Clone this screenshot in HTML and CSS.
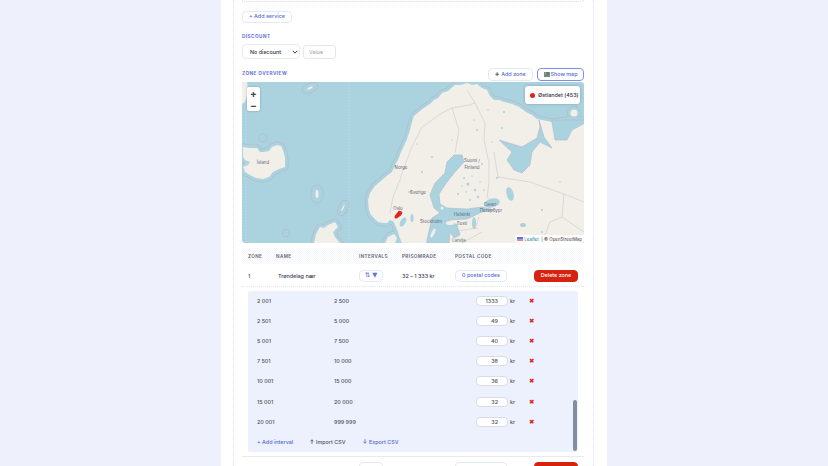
FILE: index.html
```html
<!DOCTYPE html>
<html lang="en">
<head>
<meta charset="utf-8">
<title>Zone overview</title>
<link rel="stylesheet" href="styles.css">
</head>
<body>
<main class="page">
  <section class="card">
    <div class="prev-box"></div>
    <button class="btn add-service">+ Add service</button>
    <div class="label discount-label">DISCOUNT</div>
    <div class="discount-row">
      <div class="select">No discount
        <svg class="chev" viewBox="0 0 8 5" width="6" height="4"><path d="M1 1l3 3 3-3" fill="none" stroke="#333" stroke-width="1.3"/></svg>
      </div>
      <div class="value">Value</div>
    </div>
    <div class="zone-head">
      <div class="label zone-label">ZONE OVERVIEW</div>
      <div class="zone-actions">
        <button class="btn add-zone"><span class="plus">✚</span> Add zone</button>
        <button class="btn show-map">
          <svg viewBox="0 0 8 7" width="6" height="5"><rect width="8" height="7" fill="#6b7689"/><path d="M0 5l3-2 2 2 3-2v4H0z" fill="#5f9a78"/><rect x="1" y="1" width="2" height="1.5" fill="#c9b48a"/></svg>
          Show map
        </button>
      </div>
    </div>
    <div class="map">
      <svg class="map-art" viewBox="0 0 342 161" width="342" height="161">
        <defs>
          <path id="land" d="M126 118L128 111 133 104 140 98 146 93 150 90 153 83 156 78 159 70 161 66 165 57 168 48 170 40 172 34 178 29 183 25 188 22 192 18 196 16 200 11 206 9 213 3 219 3 225 1 230 3 235 2 240 6 245 8 248 14 252 18 257 18 262 20 270 22 277 25 284 30 290 33 295 37 300 38 310 40 325 38 342 38 342 161 160 161 157 154 156 150 153 143 152 140 148 138 145 141 141 141 136 140 133 137 129 133 127 128Z"/>
          <path id="iceland" d="M1 65L8 66 15 66 18 70 21 70 27 69 30 65 35 63 39 64 41 68 43 76 43 85 37 87 31 90 27 95 21 97 14 96 8 93 3 90 1 85 6 83 8 80 3 78 1 75Z"/>
          <path id="scotland" d="M78 145L82 146 86 143 93 140 96 145 91 150 93 155 98 161 72 161 74 152Z"/>
          <path id="denmark" d="M143 161L146 155 152 152 155 156 153 161Z"/>
        </defs>
        <rect class="water" width="342" height="161"/>
        <g class="halo">
          <use href="#land"/><use href="#iceland"/><use href="#scotland"/><use href="#denmark"/>
          <ellipse cx="75" cy="112" rx="3" ry="6"/><circle cx="21" cy="56" r="1"/>
          <ellipse cx="68" cy="6" rx="5" ry="1.5" transform="rotate(-25 68 6)"/>
          <ellipse cx="101" cy="126" rx="1.5" ry="5" transform="rotate(25 101 126)"/>
          <circle cx="44" cy="151" r=".5"/><circle cx="332" cy="31" r="3.5"/>
        </g>
        <g class="halo-in">
          <use href="#land"/><use href="#iceland"/><use href="#scotland"/><use href="#denmark"/>
          <ellipse cx="75" cy="112" rx="3" ry="6"/><circle cx="21" cy="56" r="1"/>
          <ellipse cx="68" cy="6" rx="5" ry="1.5" transform="rotate(-25 68 6)"/>
          <ellipse cx="101" cy="126" rx="1.5" ry="5" transform="rotate(25 101 126)"/>
          <circle cx="44" cy="151" r=".5"/><circle cx="332" cy="31" r="3.5"/>
        </g>
        <g class="ground">
          <use href="#land"/><use href="#iceland"/><use href="#scotland"/><use href="#denmark"/>
          <path d="M0 0L5 0 6 10 3 20 0 22Z"/>
          <ellipse cx="75" cy="112" rx="1.5" ry="4"/>
          <circle cx="332" cy="31" r="3.5"/>
          <ellipse cx="68" cy="6" rx="3" ry="1" transform="rotate(-25 68 6)"/>
          <ellipse cx="101" cy="126" rx=".7" ry="3.5" transform="rotate(25 101 126)"/>
        </g>
        <g class="sea">
          <path d="M220 73L212 73 205 80 203 91 193 101 188 113 192 126 198 131 190 136 188 145 185 158 185 161 207 161 208 150 212 156 218 153 215 143 206 138 225 137 240 130 252 128 240 125 225 127 205 126 198 122 197 112 205 100 213 90 222 80Z"/>
          <path d="M297 38L302 55 310 66 298 60 290 70 288 83 280 91 272 88 265 78 270 70 257 58 267 61 280 65 295 56 298 45Z"/>
          <path d="M310 40L313 58 325 58 330 48 343 41 343 38 310 38Z"/>
        </g>
        <g class="islands">
          <ellipse cx="191" cy="151" rx="1.5" ry="5" transform="rotate(25 191 151)"/>
          <ellipse cx="208" cy="141" rx="4" ry="2"/>
          <circle cx="200" cy="126" r="1.5"/>
        </g>
        <g class="lakes">
          <ellipse cx="250" cy="121" rx="8" ry="4.5" transform="rotate(-15 250 121)"/>
          <ellipse cx="268" cy="112" rx="3.5" ry="7" transform="rotate(-15 268 112)"/>
          <ellipse cx="232" cy="141" rx="2" ry="6"/>
          <ellipse cx="281" cy="143" rx="3" ry="2"/>
          <ellipse cx="161" cy="140" rx="5" ry="2.5" transform="rotate(-60 161 140)"/>
          <ellipse cx="170" cy="136" rx="1.5" ry="4"/>
          <ellipse cx="168" cy="110" rx="2" ry="1"/>
          <circle cx="226" cy="102" r="1.5"/><circle cx="233" cy="108" r="1.2"/><circle cx="222" cy="96" r="1"/>
          <circle cx="236" cy="115" r="1.2"/><circle cx="216" cy="112" r="1"/><circle cx="228" cy="118" r="1"/>
          <circle cx="240" cy="82" r="1"/><circle cx="235" cy="48" r="1"/><circle cx="260" cy="46" r="1"/>
          <circle cx="255" cy="96" r="1"/><circle cx="278" cy="74" r="1"/><circle cx="262" cy="30" r="1"/>
          <circle cx="180" cy="90" r="1"/><circle cx="190" cy="75" r="1"/><circle cx="300" cy="128" r="1"/>
          <circle cx="220" cy="104" r=".8"/><circle cx="230" cy="94" r=".8"/><circle cx="238" cy="100" r=".8"/>
          <circle cx="224" cy="110" r=".8"/><circle cx="242" cy="108" r=".8"/><circle cx="250" cy="60" r=".8"/>
          <circle cx="210" cy="58" r=".8"/><circle cx="232" cy="38" r=".8"/><circle cx="246" cy="28" r=".8"/>
          <circle cx="300" cy="150" r="1"/><circle cx="318" cy="100" r=".8"/><circle cx="175" cy="62" r=".8"/>
        </g>
        <g class="borders">
          <path d="M227 23L233 21 243 41 242 58 247 81 247 101 245 115 250 120"/>
          <path d="M148 131L151 115 158 98 161 88 170 65 180 45 200 31 210 26 227 23"/>
          <path d="M210 26L217 48 213 71"/><path d="M233 21L225 8"/>
          <path d="M207 150L222 148 236 146M222 160L240 150M233 147L237 135"/>
          <path d="M342 120L322 112 320 135 342 150M300 161L308 140 320 135M252 70L256 95 288 100 322 112"/>
        </g>
        <path class="tile" d="M4 0V161M107 0V161"/>
        <path class="zone-shape" d="M153 134L157 129 160 130 159 133 155 136 153 136Z"/>
        <g class="map-text">
          <text x="21" y="82">Ísland</text>
          <text x="159" y="87">Norge</text>
          <text x="176" y="112">Sverige</text>
          <text x="230" y="80">Suomi /</text>
          <text x="230" y="87">Finland</text>
          <text x="156" y="128">Oslo</text>
          <text x="189" y="141">Stockholm</text>
          <text x="220" y="134">Helsinki</text>
          <text x="220" y="143">Eesti</text>
          <text x="249" y="124">Санкт-</text>
          <text x="249" y="130">Петербург</text>
          <text x="217" y="160">Latvija</text>
        </g>
      </svg>
      <div class="zoom-ctl"><span class="zoom-btn">+</span><span class="zoom-btn">−</span></div>
      <div class="legend"><i class="dot"></i>Østlandet (453)</div>
      <div class="attrib"><svg viewBox="0 0 6 4" width="6" height="4"><rect width="6" height="2" fill="#4c7be8"/><rect y="2" width="6" height="2" fill="#e88a8a"/></svg> <span class="link">Leaflet</span> | © OpenStreetMap</div>
    </div>
    <div class="tbl-head tbl-grid">
      <span>ZONE</span><span>NAME</span><span>INTERVALS</span><span>PRISOMRADE</span><span>POSTAL CODE</span>
    </div>
    <div class="tbl-row tbl-grid">
      <span>1</span>
      <span class="zname">Trøndelag nær</span>
      <span><button class="btn mini">⇅ ▼</button></span>
      <span>32 – 1 333 kr</span>
      <span class="end">
        <button class="btn postal">0 postal codes</button>
        <button class="btn danger">Delete zone</button>
      </span>
    </div>
    <div class="panel">
      <div class="int-row"><span>2 001</span><span>2 500</span><span class="num">1333</span><span class="kr">kr</span><span class="del">✖</span></div>
      <div class="int-row"><span>2 501</span><span>5 000</span><span class="num">49</span><span class="kr">kr</span><span class="del">✖</span></div>
      <div class="int-row"><span>5 001</span><span>7 500</span><span class="num">40</span><span class="kr">kr</span><span class="del">✖</span></div>
      <div class="int-row"><span>7 501</span><span>10 000</span><span class="num">38</span><span class="kr">kr</span><span class="del">✖</span></div>
      <div class="int-row"><span>10 001</span><span>15 000</span><span class="num">36</span><span class="kr">kr</span><span class="del">✖</span></div>
      <div class="int-row"><span>15 001</span><span>20 000</span><span class="num">32</span><span class="kr">kr</span><span class="del">✖</span></div>
      <div class="int-row"><span>20 001</span><span>999 999</span><span class="num">32</span><span class="kr">kr</span><span class="del">✖</span></div>
      <div class="panel-actions">
        <button class="ghost blue">+ Add interval</button>
        <button class="ghost"><svg viewBox="0 0 5 6" width="4" height="5"><path d="M2.5 6V1M.7 2.8l1.8-2 1.8 2" fill="none" stroke="currentColor" stroke-width="1"/></svg>Import CSV</button>
        <button class="ghost blue"><svg viewBox="0 0 5 6" width="4" height="5"><path d="M2.5 0v5M.7 3.2l1.8 2 1.8-2" fill="none" stroke="currentColor" stroke-width="1"/></svg>Export CSV</button>
      </div>
      <div class="scroll-thumb"></div>
    </div>
    <div class="tbl-row tbl-grid next-row">
      <span></span><span></span>
      <span><button class="btn mini"></button></span>
      <span></span>
      <span class="end">
        <button class="btn postal"></button>
        <button class="btn danger"></button>
      </span>
    </div>
  </section>
</main>
</body>
</html>
```
FILE: styles.css
```css
* { box-sizing: border-box; }
html, body { margin: 0; height: 466px; overflow: hidden; }
body { background: #eef1fb; font-family: Inter, "Liberation Sans", sans-serif; font-size: 5.4px; color: #333a45; white-space: nowrap; }
.page { width: 386px; height: 466px; margin-left: 221px; background: #fff; overflow: hidden; }
.card { margin: 0 13px 0 12px; height: 466px; border-left: 1px dotted #dfe3f0; border-right: 1px dotted #dfe3f0; padding: 0 9px 0 8px; }
.prev-box { height: 2px; border: 1px dotted #d9dce6; border-top: 0; border-radius: 0 0 3px 3px; }
button { font: inherit; margin: 0; }
.btn { display: inline-flex; align-items: center; justify-content: center; height: 12px; padding: 0; background: #fff; border: 1px solid #e3e8fb; border-radius: 4px; color: #5366d6; font-weight: 500; line-height: 1; }
.add-service { width: 50px; margin-top: 8.5px; display: flex; }
.label { font-size: 4.7px; font-weight: 700; letter-spacing: .45px; color: #6475e0; line-height: 7px; }
.discount-label { margin-top: 10.5px; }
.discount-row { display: flex; gap: 3px; margin-top: 4px; align-items: center; }
.select { width: 58px; height: 15px; display: flex; align-items: center; justify-content: space-between; padding: 0 1px 0 7px; border: 1px solid #e6e9f6; border-radius: 4px; color: #2c313b; font-weight: 500; }
.value { width: 33px; height: 14px; display: flex; align-items: center; padding-left: 5px; border: 1px solid #e3e6f2; border-radius: 3px; color: #9aa1ae; }
.zone-head { display: flex; justify-content: space-between; align-items: flex-start; margin-top: 9px; height: 13px; }
.zone-label { margin-top: 2px; }
.zone-actions { display: flex; gap: 4px; }
.add-zone { width: 45px; height: 13px; }
.plus { color: #5c6675; margin-right: 2px; }
.show-map { width: 47px; height: 13px; border: 1.5px solid #7d8ff0; gap: 1px; border-radius: 4px; }
.map { position: relative; width: 342px; height: 161px; margin-top: 1px; border-radius: 3px; overflow: hidden; }
.map-art { display: block; }
.water { fill: #aad3df; }
.halo use, .halo ellipse, .halo circle { fill: #b3bdcb; stroke: #b3bdcb; stroke-width: 7; stroke-linejoin: round; }
.halo-in use, .halo-in ellipse, .halo-in circle { fill: #aad3df; stroke: #aad3df; stroke-width: 5.4; stroke-linejoin: round; }
.ground { fill: #f2efe9; }
.sea path { fill: #aad3df; stroke: #b3bdcb; stroke-width: .7; stroke-linejoin: round; }
.islands { fill: #f2efe9; }
.lakes { fill: #aad3df; }
.borders { fill: none; stroke: #cac7cf; stroke-width: .6; }
.tile { fill: none; stroke: #d4e4ea; stroke-width: .5; stroke-dasharray: 1 2; }
.zone-shape { fill: #e2231a; stroke: #e2231a; stroke-width: .8; }
.map-text { font-size: 4.4px; fill: #5e6672; text-anchor: middle; }
.zoom-ctl { position: absolute; left: 5px; top: 5px; width: 13px; display: flex; flex-direction: column; background: #fff; border-radius: 2px; box-shadow: 0 0 2px rgba(0,0,0,.3); }
.zoom-btn { height: 12px; display: flex; align-items: center; justify-content: center; font-size: 10px; font-weight: 700; color: #444; line-height: 1; }
.legend { position: absolute; left: 283px; top: 4px; width: 55px; height: 18px; display: flex; align-items: center; gap: 3px; padding-left: 5px; background: #fff; border-radius: 3px; box-shadow: 0 0 3px rgba(0,0,0,.25); color: #2c313b; font-weight: 500; }
.dot { width: 5px; height: 5px; border-radius: 50%; background: #e0201a; }
.attrib { position: absolute; right: 0; bottom: 0; height: 8px; padding: 0 2px; display: flex; align-items: center; gap: 1.5px; background: rgba(255,255,255,.8); color: #444; font-size: 4.4px; white-space: pre; }
.link { color: #0078a8; }
.tbl-grid { display: grid; grid-template-columns: 28px 83px 43px 53px 1fr; padding: 0 6px; align-items: center; }
.tbl-head { height: 16px; margin-top: 5px; font-size: 4.6px; font-weight: 600; letter-spacing: .4px; color: #5d6573; background: repeating-conic-gradient(#fff 0 25%, #f5f6fa 0 50%) 0 0 / 2px 2px; }
.tbl-row { height: 22px; margin-top: 1px; border-bottom: 1px dotted #e3e5ec; color: #39404c; font-weight: 500; }
.zname { padding-left: 2px; }
.mini { width: 24px; font-size: 6.5px; font-family: "DejaVu Sans", sans-serif; color: #6272e0; }
.end { display: flex; justify-content: space-between; }
.postal { width: 52px; }
.danger { width: 44px; background: #d6230f; border-color: #d6230f; color: #fff; }
.panel { position: relative; margin: 4px 6px 0; height: 161px; padding: 0 0 0 9px; background: #edf1fd; border-radius: 2px; }
.int-row { display: grid; grid-template-columns: 77px 142px 32px 21px 12px; align-items: center; height: 20.1px; color: #49505c; font-weight: 500; }
.num { height: 10px; display: flex; align-items: center; justify-content: flex-end; padding-right: 9px; background: #fff; border: 1px solid #d9dce6; border-radius: 4px; }
.kr { padding-left: 2px; }
.del { color: #e2231a; font-size: 6.5px; font-family: "DejaVu Sans", sans-serif; }
.panel-actions { display: flex; gap: 15px; height: 20px; align-items: center; }
.ghost { padding: 0; background: none; border: 0; color: #4a5261; font-weight: 500; width: 38px; display: flex; align-items: center; gap: 2px; justify-content: flex-start; }
.ghost.blue { color: #5366d6; }
.scroll-thumb { position: absolute; right: 1px; bottom: 1px; width: 4px; height: 51px; background: #858d9d; border-radius: 2px; }
.next-row { margin-top: 4px; padding-top: 5px; align-items: start; border-top: 1px solid #e8eaf0; border-bottom: 0; height: 30px; }
```
